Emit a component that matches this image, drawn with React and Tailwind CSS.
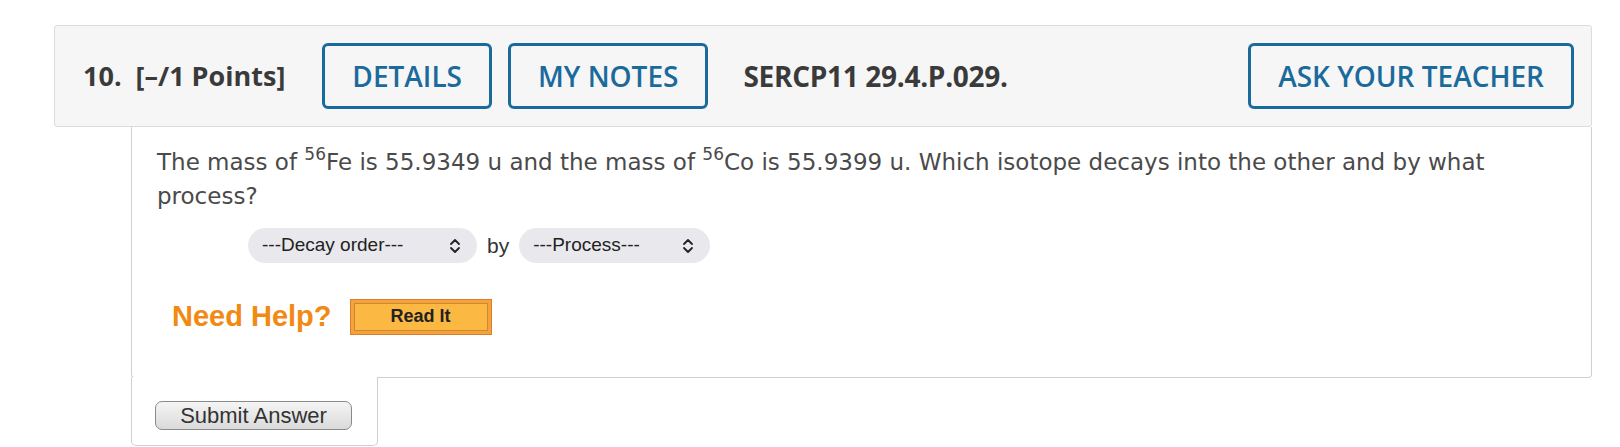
function Chevrons() {
  return (
    <svg width="12" height="16" viewBox="0 0 12 16" fill="none" stroke="#222" strokeWidth="1.8" strokeLinecap="round" strokeLinejoin="round">
      <path d="M2 6l4-4 4 4" />
      <path d="M2 10l4 4 4-4" />
    </svg>
  );
}

function FakeSelect({ label, width }) {
  return (
    <div
      className={`${width} h-[35px] rounded-full bg-[#e9e9ed] flex items-center justify-between pl-[14px] pr-[16px] text-[19px] text-[#222] font-['Liberation_Sans',Arial,sans-serif]`}
    >
      <span>{label}</span>
      <Chevrons />
    </div>
  );
}

function HeaderButton({ children }) {
  return (
    <button className="h-[66px] px-[27px] border-[3px] border-[#1b6a9c] rounded-[6px] text-[#1b6a9c] text-[28px] font-semibold bg-transparent">
      {children}
    </button>
  );
}

export default function App() {
  return (
    <div className="bg-white w-full h-[447px] pt-[25px] pl-[54px] pr-[28px] font-['Open_Sans',sans-serif]">
      <div className="h-[102px] border border-[#dcdcdc] rounded-[3px] bg-[#f6f6f6] flex items-center pl-[28px] pr-[17px]">
        <span className="text-[27px] font-bold text-[#3a3a3a]">10.</span>
        <span className="ml-[14px] text-[27px] font-bold text-[#3a3a3a]">[–/1 Points]</span>
        <div className="ml-[37px] flex gap-[16px]">
          <HeaderButton>DETAILS</HeaderButton>
          <HeaderButton>MY NOTES</HeaderButton>
        </div>
        <span className="ml-[35px] text-[28px] font-bold text-[#3a3a3a] tracking-[-0.3px]">SERCP11 29.4.P.029.</span>
        <div className="ml-auto">
          <HeaderButton>ASK YOUR TEACHER</HeaderButton>
        </div>
      </div>

      <div className="ml-[77px]">
        <div className="h-[251px] border-x border-b border-[#d0d0d0] rounded-b-[4px] pt-[18px] pl-[25px] pr-[100px]">
          <p className="text-[23px] leading-[34px] text-[#4a4a4a] font-['DejaVu_Sans',Verdana,sans-serif]">
            The mass of <sup className="text-[17px] leading-none relative -top-[10px]">56</sup>Fe is 55.9349 u and the mass of{' '}
            <sup className="text-[17px] leading-none relative -top-[10px]">56</sup>Co is 55.9399 u. Which isotope decays into the other and by what process?
          </p>
          <div className="mt-[15px] ml-[91px] flex items-center">
            <FakeSelect label="---Decay order---" width="w-[229px]" />
            <span className="mx-[10px] text-[21px] text-[#333] font-['Liberation_Sans',Arial,sans-serif]">by</span>
            <FakeSelect label="---Process---" width="w-[191px]" />
          </div>
          <div className="mt-[32px] ml-[15px] flex items-center">
            <span className="text-[29px] font-bold text-[#f08a12] font-['Liberation_Sans',Arial,sans-serif]">Need Help?</span>
            <div className="ml-[18px] w-[142px] h-[36px] border border-[#d9802c] bg-[#f7a13a] p-[3px]">
              <div className="w-full h-full border border-[#c98a34] bg-[#fbb843] flex items-center justify-center text-[18px] font-bold text-[#222] font-['Liberation_Sans',Arial,sans-serif]">
                Read It
              </div>
            </div>
          </div>
        </div>
        <div className="-mt-px w-[247px] h-[69px] bg-white border-x border-b border-[#d0d0d0] rounded-b-[5px] pt-[24px] pl-[23px]">
          <button className="w-[197px] h-[29px] rounded-[7px] border border-[#8a8a8a] bg-gradient-to-b from-[#f5f5f5] to-[#dadada] text-[22px] leading-none text-[#333] font-['Liberation_Sans',Arial,sans-serif]">
            Submit Answer
          </button>
        </div>
      </div>
    </div>
  );
}
